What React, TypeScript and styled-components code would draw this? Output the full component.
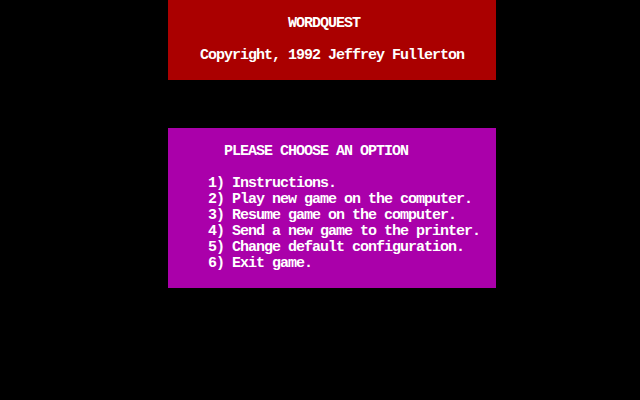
import React from "react";
import styled, { createGlobalStyle } from "styled-components";

const CELL_W = 8;
const CELL_H = 16;

const GlobalStyle = createGlobalStyle`
    html, body {
        margin: 0;
        padding: 0;
        background: #000;
    }
`;

const Screen = styled.div`
    width: 640px;
    height: 400px;
    background: #000;
    display: flex;
    flex-direction: column;
    gap: ${CELL_H * 3}px;
    padding-left: ${CELL_W * 21}px;
    box-sizing: border-box;
    font-family: "Liberation Mono", "DejaVu Sans Mono", monospace;
    font-weight: 700;
    font-size: 15px;
    letter-spacing: -1px;
    color: #fff;
    overflow: hidden;
`;

const Panel = styled.div<{ $bg: string; $rows: number }>`
    width: ${CELL_W * 41}px;
    height: ${(p) => p.$rows * CELL_H}px;
    background: ${(p) => p.$bg};
    padding-top: ${CELL_H}px;
    box-sizing: border-box;
    display: flex;
    flex-direction: column;
`;

const Line = styled.div<{ $col: number; $gapBefore?: number }>`
    height: ${CELL_H}px;
    line-height: ${CELL_H}px;
    padding-left: ${(p) => p.$col * CELL_W}px;
    margin-top: ${(p) => (p.$gapBefore || 0) * CELL_H}px;
    white-space: pre;
`;

const options = [
    "1) Instructions.",
    "2) Play new game on the computer.",
    "3) Resume game on the computer.",
    "4) Send a new game to the printer.",
    "5) Change default configuration.",
    "6) Exit game.",
];

export default function App() {
    return (
        <>
            <GlobalStyle />
            <Screen>
                <Panel $bg="#aa0000" $rows={5}>
                    <Line $col={15}>WORDQUEST</Line>
                    <Line $col={4} $gapBefore={1}>
                        Copyright, 1992 Jeffrey Fullerton
                    </Line>
                </Panel>
                <Panel $bg="#aa00aa" $rows={10}>
                    <Line $col={7}>PLEASE CHOOSE AN OPTION</Line>
                    {options.map((o, i) => (
                        <Line key={o} $col={5} $gapBefore={i === 0 ? 1 : 0}>
                            {o}
                        </Line>
                    ))}
                </Panel>
            </Screen>
        </>
    );
}
